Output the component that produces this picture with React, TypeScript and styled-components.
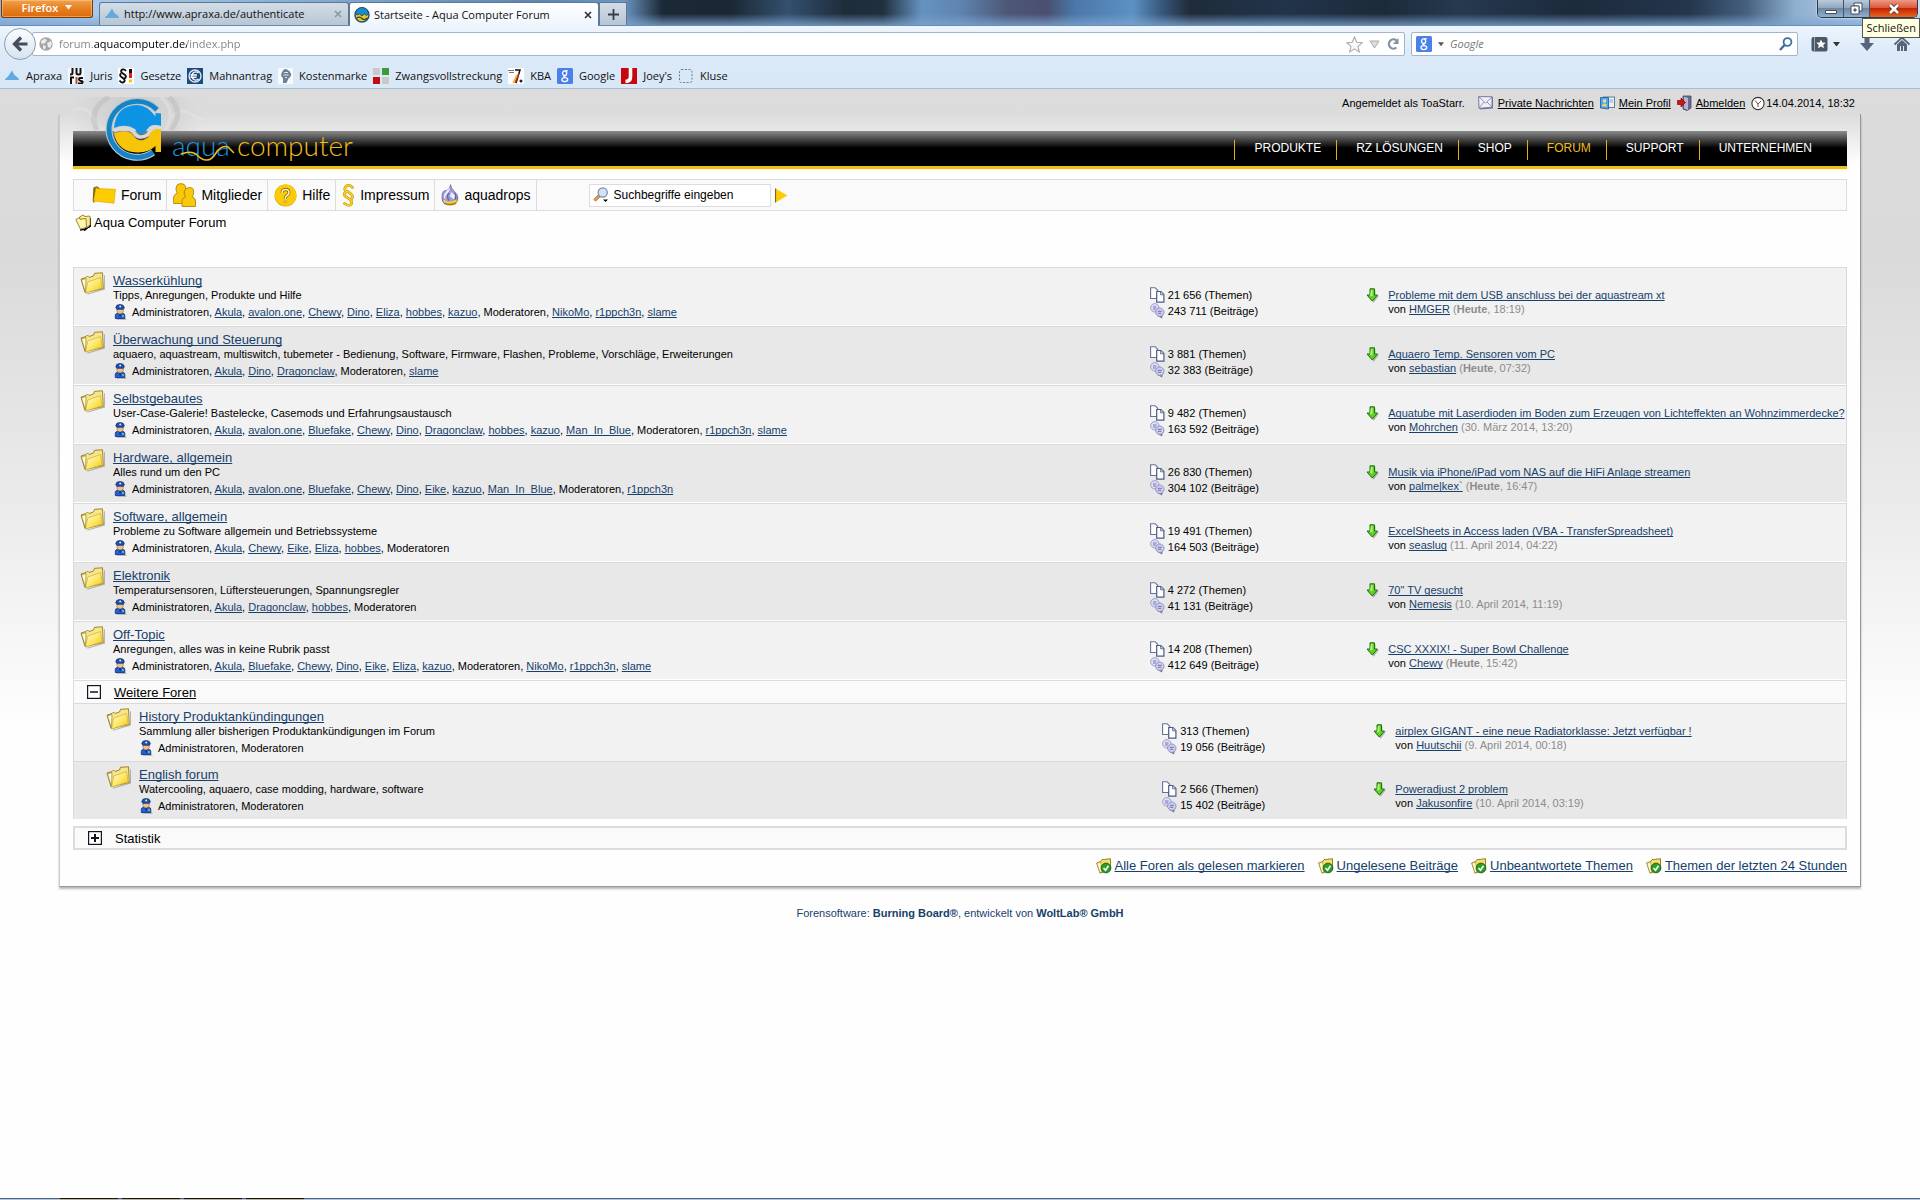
import React from "react";
import styled, { createGlobalStyle, css } from "styled-components";

const ui = `"Open Sans", "Noto Sans", sans-serif`;
const forumFont = `"Liberation Sans", Arial, sans-serif`;

const Global = createGlobalStyle`
  * { box-sizing: border-box; }
  html, body { margin: 0; padding: 0; background: #fefefe; }
  body { font-family: ${forumFont}; font-size: 11px; color: #000; }
  button, input { font: inherit; color: inherit; }
  svg { display: block; flex: none; }
`;

const Shell = styled.div`
  min-height: 100vh;
  display: flex;
  flex-direction: column;
`;

/* ---------- browser window ---------- */

const TitleBar = styled.div`
  position: relative;
  display: flex;
  align-items: flex-end;
  height: 26px;
  padding-left: 1px;
  border-bottom: 1px solid #6a8cb0;
  background:
    linear-gradient(180deg, transparent 55%, rgba(125, 165, 210, 0.75) 100%),
    linear-gradient(90deg, #8fb6df 0, #a9c9ea 5%, #86acd4 16%, #5f86b0 28%, #6c96c4 32.5%,
      #1c2936 34.5%, #1b2732 38%, #33506e 41%, #1f2c3a 44%, #20303f 46%, #6692c0 48%,
      #5f84b0 50%, #4c5775 52.5%, #4a4f70 54.5%, #4a78a8 56%, #5d91c4 59%, #38587a 60.5%,
      #1f2b39 62%, #22344a 67%, #1d2a39 72%, #26394f 76%, #1d2a3b 82%, #24364c 88%,
      #45617f 91%, #8fb0d0 93.5%, #b3cce6 97%, #c4d8ee 100%);
`;

const FirefoxButton = styled.button`
  align-self: flex-start;
  display: flex;
  align-items: center;
  justify-content: center;
  gap: 7px;
  width: 92px;
  height: 18px;
  padding: 0 8px 2px 8px;
  border: 1px solid #7c3a06;
  border-top: 0;
  border-radius: 0 0 3px 3px;
  background: linear-gradient(#f0a24c, #e87f22 50%, #d96b0c);
  box-shadow: inset 0 0 0 1px rgba(255, 210, 150, 0.5);
  color: #fff;
  font: 600 11px/14px ${ui};
`;

const Tab = styled.button<{ $active?: boolean }>`
  display: flex;
  align-items: center;
  gap: 4px;
  width: 250px;
  height: ${(p) => (p.$active ? 24 : 23)}px;
  margin-bottom: ${(p) => (p.$active ? -1 : 0)}px;
  padding: 0 6px 0 4px;
  border: 1px solid #5b7896;
  border-bottom: 0;
  border-radius: 3px 3px 0 0;
  background: ${(p) =>
    p.$active ? "linear-gradient(#ffffff, #eef5fc)" : "linear-gradient(#d3dde6, #b7c6d5)"};
  color: #111;
  font: 11px/16px ${ui};
  text-align: left;
  white-space: nowrap;
`;
const TabStrip = styled.nav`
  display: flex;
  align-items: flex-end;
  margin-left: 6px;
`;
const TabTitle = styled.span`
  flex: 1;
`;
const NewTab = styled.button`
  display: flex;
  align-items: center;
  justify-content: center;
  width: 28px;
  height: 23px;
  padding: 0;
  border: 1px solid #5b7896;
  border-bottom: 0;
  background: linear-gradient(#d3dde6, #b7c6d5);
`;

const WindowButtons = styled.div`
  align-self: flex-start;
  display: flex;
  margin-left: auto;
  margin-right: 2px;
  border: 1px solid #2a3a4c;
  border-top: 0;
  border-radius: 0 0 5px 5px;
  overflow: hidden;
  box-shadow: 0 0 2px #fff;
`;
const WindowButton = styled.button<{ $close?: boolean }>`
  display: flex;
  align-items: center;
  justify-content: center;
  width: ${(p) => (p.$close ? 47 : 26)}px;
  height: 17px;
  padding: 0;
  border: 0;
  border-right: ${(p) => (p.$close ? 0 : "1px solid #3f556d")};
  background: ${(p) =>
    p.$close
      ? "linear-gradient(#eb9a85, #dd5a3a 45%, #c62405 50%, #e8661c)"
      : "linear-gradient(#b9cadb, #93a9bf 45%, #6f88a2 50%, #8fb0cf)"};
`;
const Tooltip = styled.div`
  position: absolute;
  z-index: 2;
  right: 0;
  top: 18px;
  padding: 1px 3px;
  border: 1px solid #555;
  background: #ffffe1;
  color: #111;
  font: 11px/16px ${ui};
`;

const Toolbars = styled.div`
  background: linear-gradient(#edf5fd, #dbe9f8 45%, #d9e8f7);
  border-bottom: 1px solid #a8bdd4;
`;
const NavBar = styled.div`
  display: flex;
  align-items: center;
  height: 36px;
  padding: 0 10px 0 4px;
`;
const BackButton = styled.button`
  position: relative;
  z-index: 1;
  display: flex;
  align-items: center;
  justify-content: center;
  width: 32px;
  height: 32px;
  padding: 0;
  border: 1px solid #8c9db0;
  border-radius: 50%;
  background: linear-gradient(#fbfdff, #d7e3f0);
`;
const Field = styled.div<{ $width?: string; $joined?: boolean }>`
  display: flex;
  align-items: center;
  gap: 6px;
  flex: ${(p) => (p.$width ? `0 0 ${p.$width}` : "1")};
  height: 24px;
  margin-left: ${(p) => (p.$joined ? -4 : 6)}px;
  padding: 0 4px 0 ${(p) => (p.$joined ? 6 : 4)}px;
  border: 1px solid #a3b5c9;
  border-radius: 2px;
  background: #fff;
`;
const UrlInput = styled.input`
  flex: 1;
  min-width: 0;
  padding: 0;
  border: 0;
  outline: 0;
  background: linear-gradient(90deg, #808080 35px, #000 35px, #000 128px, #808080 128px) text;
  -webkit-text-fill-color: transparent;
  font: 11px/16px ${ui};
`;
const GoogleInput = styled.input`
  flex: 1;
  min-width: 0;
  padding: 0;
  border: 0;
  outline: 0;
  background: none;
  font: italic 11px/16px ${ui};
  &::placeholder { color: #777; opacity: 1; }
`;
const PlainButton = styled.button`
  display: flex;
  align-items: center;
  gap: 5px;
  padding: 0;
  border: 0;
  background: none;
`;
const ToolIcons = styled.div`
  display: flex;
  align-items: center;
  gap: 20px;
  margin-left: 13px;
`;
const Bookmarks = styled.nav`
  display: flex;
  align-items: center;
  gap: 6px;
  height: 26px;
  padding: 1px 0 0 4px;
`;
const Bookmark = styled.a`
  display: flex;
  align-items: center;
  gap: 6px;
  color: #111;
  text-decoration: none;
  white-space: nowrap;
  font: 11px/16px ${ui};
`;

/* ---------- forum page ---------- */

const Page = styled.main`
  flex: 1;
  background: linear-gradient(#dcdcdc 0, #dadada 170px, #ececec 430px, #fefefe 640px);
`;
const UserPanel = styled.div`
  display: flex;
  justify-content: flex-end;
  align-items: center;
  gap: 6px;
  height: 25px;
  padding: 3px 65px 0 0;
  line-height: 14px;
`;
const UserItem = styled.span<{ $tight?: boolean }>`
  display: flex;
  align-items: center;
  gap: ${(p) => (p.$tight ? 1 : 4)}px;
`;
const UserName = styled.span`
  margin-right: 7px;
`;
const linkLine = css`
  text-decoration: underline;
  text-decoration-skip-ink: none;
  text-underline-offset: 1px;
  text-decoration-thickness: 1px;
`;
const DarkLink = styled.a`
  color: #000;
  ${linkLine}
`;
const Link = styled.a`
  color: #173f6b;
  ${linkLine}
`;

const Frame = styled.div`
  position: relative;
  margin: 0 59px;
  padding: 17px 13px 10px;
  border: 1px solid #999;
  border-top: 0;
  border-left-color: #cbcbcb;
  background: linear-gradient(rgba(255, 255, 255, 0) 0, #fefefe 50px);
  box-shadow: 0 2px 2px rgba(0, 0, 0, 0.28);
`;
const Brand = styled.a`
  position: absolute;
  left: 13px;
  top: -18px;
`;
const Header = styled.header`
  display: flex;
  justify-content: flex-end;
  height: 38px;
  padding: 9px 20px 0 0;
  border-bottom: 3px solid #efbd23;
  background: linear-gradient(#8c8c8c, #000 17px);
  box-shadow: 0 1px 1px #ffffc0;
`;
const HeaderLink = styled.a<{ $current?: boolean }>`
  height: 20px;
  padding: 0 15px 0 19px;
  border-left: 1px solid #e0ae22;
  color: ${(p) => (p.$current ? "#f0bb20" : "#fff")};
  font-size: 12px;
  line-height: 16px;
  text-decoration: none;
`;

const MenuBar = styled.nav`
  display: flex;
  align-items: center;
  height: 32px;
  margin-top: 10px;
  padding-left: 12px;
  border: 1px solid #dcdcdc;
  background: #fafafa;
`;
const MenuLink = styled.a`
  display: flex;
  align-items: center;
  gap: 5px;
  height: 30px;
  padding: 0 5px 0 6px;
  border-right: 1px solid #dcdcdc;
  color: #000;
  font-size: 14px;
  text-decoration: none;
`;
const SearchForm = styled.form`
  display: flex;
  align-items: center;
  gap: 4px;
  margin-left: 52px;
`;
const SearchBox = styled.label`
  display: flex;
  align-items: center;
  gap: 5px;
  width: 182px;
  height: 23px;
  padding-left: 3px;
  border: 1px solid #dcdcdc;
  background: #fff;
`;
const SearchInput = styled.input`
  width: 140px;
  padding: 0;
  border: 0;
  outline: 0;
  background: none;
  font-size: 12px;
`;

const Crumbs = styled.div`
  display: flex;
  align-items: center;
  gap: 2px;
  height: 22px;
  margin-bottom: 34px;
  padding-left: 2px;
  font-size: 13px;
`;

const Table = styled.table`
  width: 100%;
  table-layout: fixed;
  border-spacing: 0;
  border-collapse: separate;
`;
const Row = styled.tr<{ $alt: boolean }>`
  background: ${(p) => (p.$alt ? "#e8e8e8" : "#f2f2f2")};
`;
const Cell = styled.td<{ $top: number; $nested?: boolean }>`
  height: ${(p) => (p.$nested ? 58 : 59)}px;
  padding: ${(p) => p.$top}px 0 0;
  border: 0 solid #d9d9d9;
  border-top-width: 1px;
  border-bottom: ${(p) => (p.$nested ? "0" : "1px solid #fff")};
  vertical-align: top;
  white-space: nowrap;
  &:first-child { border-left-width: 1px; }
  &:last-child { border-right-width: 1px; }
`;
const FolderCell = styled(Cell)`
  padding-left: ${(p) => (p.$nested ? 32 : 6)}px;
`;
const Title = styled(Link)`
  display: table;
  font-size: 13px;
  line-height: 16px;
`;
const Description = styled.div`
  line-height: 13px;
`;
const Staff = styled.div`
  display: flex;
  align-items: center;
  gap: 4px;
  height: 14px;
  margin-top: 3px;
  line-height: 14px;
`;
const Stat = styled.div`
  display: flex;
  align-items: center;
  gap: 3px;
  height: 16px;
`;
const LastPost = styled.div`
  display: flex;
  gap: 9px;
  line-height: 14px;
`;
const PostTime = styled.span`
  color: #8c8c8c;
`;

const SectionBar = styled.button<{ $boxed?: boolean }>`
  display: flex;
  align-items: center;
  gap: 13px;
  width: 100%;
  height: ${(p) => (p.$boxed ? 24 : 23)}px;
  margin-top: ${(p) => (p.$boxed ? 7 : 0)}px;
  padding: 0 0 0 13px;
  border: solid #dcdcdc;
  border-width: ${(p) => (p.$boxed ? "2px" : "1px 1px 0")};
  background: #fafafa;
  font-size: 13px;
  text-align: left;
`;
const SectionName = styled.span<{ $underlined?: boolean }>`
  ${(p) => p.$underlined && linkLine}
`;

const Actions = styled.div`
  display: flex;
  justify-content: flex-end;
  gap: 13px;
  margin-top: 6px;
  font-size: 13px;
  line-height: 20px;
`;
const Action = styled.span`
  display: flex;
  align-items: center;
  gap: 3px;
`;
const Footer = styled.footer`
  padding-top: 19px;
  color: #173f6b;
  line-height: 14px;
  text-align: center;
`;

const Taskbar = styled.div`
  display: flex;
  gap: 4px;
  height: 2px;
  padding-left: 60px;
  border-top: 1px solid #4d6480;
  background: #b4c8e2;
`;
const TaskItem = styled.span`
  width: 58px;
  height: 2px;
  margin-top: -1px;
  background: linear-gradient(#10161e 1px, #c8b48c 1px);
`;

/* ---------- icons ---------- */

const Folder = () => (
  <svg width="25" height="23" viewBox="0 0 25 23">
    <defs>
      <linearGradient id="fold" x1="0" y1="0" x2="1" y2="1">
        <stop offset="0" stopColor="#fffde0" />
        <stop offset="0.5" stopColor="#fde96c" />
        <stop offset="1" stopColor="#f2c40e" />
      </linearGradient>
    </defs>
    <path d="M6 22 24 16.500V3l1 .5v14L8 22.500z" fill="#777" opacity=".5" />
    <path d="M5 20.500 1 7l5-1.500L7.500 4l1.500 1.500L13.500 4l1-2.700L22.500 .8l.8 15.700z" fill="#f7e58c" stroke="#94791c" strokeWidth=".9" />
    <path d="m5.500 20.500-4-12.500L6 6.500z" fill="#fffbd8" stroke="#87701b" strokeWidth=".6" />
    <path d="m5.500 21 2.300-11L20.500 5.500l1.700 10.500z" fill="url(#fold)" stroke="#c9a420" strokeWidth=".6" />
  </svg>
);
const Officer = () => (
  <svg width="15" height="16" viewBox="0 0 15 16">
    <path d="M3 14.500h10l.8.700-1 .8H4z" fill="#999" opacity=".6" />
    <path d="M2.300 14.500V11.500q0-1.800 2-2.200h5.500q2 .4 2 2.200v3z" fill="#1d62d8" stroke="#0b2c7c" strokeWidth=".8" />
    <path d="M4 4.800h6.200v2.900Q9.500 10 7.100 10T4 7.700z" fill="#f0c08c" stroke="#7c5227" strokeWidth=".5" />
    <path d="M2.800 3.600Q3 .5 7 .5t4.300 3.100L10.500 5.200H3.700z" fill="#1c50bc" stroke="#0b2660" strokeWidth=".7" />
    <circle cx="7.200" cy="2.600" r="1" fill="#f2e9b0" />
    <path d="m6.300 10.200.8 3.800.8-3.800z" fill="#0a1f55" />
    <path d="M9 11.500h2v1H9z" fill="#f5d95a" />
  </svg>
);
const Docs = () => (
  <svg width="15" height="16" viewBox="0 0 15 16">
    <path d="M.6.700h4.500l2.600 2.600v8.200H.6z" fill="#fff" stroke="#64719b" strokeWidth="1.100" />
    <path d="M6.700 4.500h4.200l3 3v7.700H6.700z" fill="#fff" stroke="#4b5a88" strokeWidth="1.200" />
    <path d="M10.600 4.700v3.100h3.200" fill="#ccd5ec" stroke="#4b5a88" strokeWidth=".8" />
  </svg>
);
const Chats = () => (
  <svg width="15" height="16" viewBox="0 0 15 16">
    <path d="M13.500 9.500 12 15.500 7.500 13z" fill="#77759c" />
    <circle cx="4.800" cy="4.800" r="4.200" fill="#dcdcf6" stroke="#8f90bc" strokeWidth=".8" />
    <path d="M3 4h3.500M3 6h3" stroke="#6c6ca8" strokeWidth=".9" />
    <circle cx="9.800" cy="9.200" r="4.200" fill="#cfcff2" stroke="#8081ae" strokeWidth=".8" />
    <path d="M7.800 8.300h4M7.800 10.300h3.500" stroke="#6464a0" strokeWidth=".9" />
  </svg>
);
const DownArrow = () => (
  <svg width="13" height="15" viewBox="0 0 13 15">
    <path d="M4 1.500h5v5.500h3.500L7.200 14 1 7.500h3z" fill="#777" opacity=".5" transform="translate(.5 .7)" />
    <path d="M4 .8h4.500v6.200h3L6.300 13 1 7h3z" fill="#5ad61e" stroke="#21720c" strokeWidth="1" />
    <path d="M5 2h1.500v6H4z" fill="#b4f08a" />
  </svg>
);
const CheckFolder = () => (
  <svg width="16" height="16" viewBox="0 0 16 16">
    <path d="M.7 5 4.500 3.600 6 1.500h1.800L14.500 .7v11L4 15.200z" fill="#f8dd6a" stroke="#8d701a" strokeWidth=".9" />
    <path d="M4 15 .9 5.200 4.600 4 6 13z" fill="#fff8c4" stroke="#a98a2a" strokeWidth=".6" />
    <circle cx="10" cy="10" r="4.900" fill="#2e9d28" stroke="#155f14" strokeWidth=".8" />
    <path d="m7.500 10 2 2.200 3-4.400" fill="none" stroke="#fff" strokeWidth="1.600" />
  </svg>
);
const Plaque = ({ plus }: { plus?: boolean }) => (
  <svg width="14" height="14" viewBox="0 0 14 14">
    <rect x=".6" y=".6" width="12.800" height="12.800" fill="#fff" stroke="#15151f" strokeWidth="1.200" />
    <path d={plus ? "M3 7h8M7 3v8" : "M3 7h8"} stroke="#15151f" strokeWidth={plus ? 2 : 1.500} />
  </svg>
);
const Caret = ({ color = "#333", size = 7 }: { color?: string; size?: number }) => (
  <svg width={size} height="5" viewBox="0 0 7 5">
    <path d="M0 0h7L3.500 4.500z" fill={color} />
  </svg>
);
const Apraxa = () => (
  <svg width="16" height="16" viewBox="0 0 16 16">
    <path d="M1 12q0-2 2-2.500L5 7l3-4.500L10.500 7l2.500 2q2 1 2 3z" fill="#62aadf" />
  </svg>
);
const AquaMark = () => (
  <svg width="16" height="16" viewBox="0 0 16 16">
    <circle cx="8" cy="8" r="7" fill="#f3c317" stroke="#15507e" strokeWidth="1.400" />
    <path d="M1.500 7a6.500 6.500 0 0 1 13 0l-2 1.500L10.500 7 8 9 5.500 7 3 8z" fill="#1b8bd0" stroke="#143c50" strokeWidth=".7" />
    <path d="M3 11q2.500-2 5 .5t5-.5" fill="none" stroke="#1a465c" strokeWidth="1.200" />
  </svg>
);
const GoogleG = () => (
  <svg width="16" height="16" viewBox="0 0 16 16">
    <rect width="16" height="16" rx="1.500" fill="#4a80ea" />
    <ellipse cx="7.600" cy="5.200" rx="2.100" ry="2.300" fill="none" stroke="#fff" strokeWidth="1.300" />
    <ellipse cx="7.800" cy="11.600" rx="2.900" ry="2" fill="none" stroke="#fff" strokeWidth="1.300" />
    <path d="M8 2.700h3M8.500 7.400 7 8.500l2 1.200" fill="none" stroke="#fff" strokeWidth="1.100" />
  </svg>
);
const Juris = () => (
  <svg width="16" height="16" viewBox="0 0 16 16">
    <rect width="16" height="16" fill="#f4f8fc" />
    <path d="M4.500 0v5q0 1.500-2.500 1.500M8.500 0v5q0 1.500 2 1.500T12.500 5V0" fill="none" stroke="#111" strokeWidth="2" />
    <path d="M3 16V9.500h3M15 10h-3q-1 0-1 1.300T13 13t1.500 1.500-1.300 1H10" fill="none" stroke="#111" strokeWidth="2" />
    <path d="M8.500 9v7" stroke="#b8552a" strokeWidth="2" />
  </svg>
);
const Gesetze = () => (
  <svg width="16" height="16" viewBox="0 0 16 16">
    <rect width="16" height="16" fill="#fff" />
    <path d="M8 3Q6.500 1 4.500 1.500T3.500 4.500L7 7q2 2-.5 3.500M3 5.500q-2 2 .5 3.500L6 11q1.500 2-.5 3.200T1.500 12.500" fill="none" stroke="#111" strokeWidth="1.900" />
    <path d="M11 1h3v4h-3z" fill="#111" />
    <path d="M11 5h3v5h-3z" fill="#d22" />
    <path d="M11 11.500h3v3h-3z" fill="#f4c414" />
  </svg>
);
const Mahn = () => (
  <svg width="16" height="16" viewBox="0 0 16 16">
    <rect width="16" height="16" fill="#1f4a7c" />
    <circle cx="8" cy="8" r="6" fill="none" stroke="#dce8f4" strokeWidth="1.400" />
    <path d="M11.500 5a4 4 0 1 0 0 6M3.500 7h6.500M3.500 9.200h6" fill="none" stroke="#fff" strokeWidth="1.400" />
  </svg>
);
const Kosten = () => (
  <svg width="15" height="16" viewBox="0 0 15 16">
    <rect width="15" height="16" fill="#f6fafd" />
    <path d="M5 15V10Q2 8 4 4t5-2.500 4 4-2.500 5L8.500 15z" fill="#6d8196" />
    <path d="M6 4.500h4M5.500 7h5M7 9.500h2" stroke="#dfe8f0" strokeWidth="1" />
  </svg>
);
const Zwang = () => (
  <svg width="16" height="16" viewBox="0 0 16 16">
    <path d="M0 0h7v7H0z" fill="#c9c9c9" />
    <path d="M9 0h7v7H9z" fill="#3d9a37" />
    <path d="M0 9h7v7H0z" fill="#c20a10" />
    <path d="M9 9h7v7H9z" fill="#c9c9c9" />
  </svg>
);
const Kba = () => (
  <svg width="16" height="16" viewBox="0 0 16 16">
    <rect width="16" height="16" fill="#fff" />
    <path d="M0 2.500h6M1 4.500h5" stroke="#777" strokeWidth="1" />
    <path d="M7 2h5L8 15" fill="none" stroke="#111" strokeWidth="1.500" />
    <path d="M11 5 7 15" stroke="#d22" strokeWidth="1.500" />
    <path d="m9 7-4 8" stroke="#f0b814" strokeWidth="1.500" />
    <circle cx="13" cy="13" r="1.500" fill="#222" />
  </svg>
);
const Joey = () => (
  <svg width="16" height="16" viewBox="0 0 16 16">
    <rect width="16" height="16" fill="#c8060c" />
    <path d="M9.500 0v9q0 4-5 4.500" fill="none" stroke="#fff" strokeWidth="3.600" />
  </svg>
);
const Blank = () => (
  <svg width="16" height="16" viewBox="0 0 16 16">
    <rect x="1.500" y="1.500" width="12.500" height="13" rx="2" fill="none" stroke="#777" strokeDasharray="2 1.500" />
  </svg>
);
const Globe = () => (
  <svg width="14" height="14" viewBox="0 0 14 14">
    <circle cx="7" cy="7" r="6.700" fill="#a5a5a5" />
    <path d="M2 4 6 1.500l2 2L6 6 4 7 2 6zM8 6l4-2 1 3-2 4-2-1zM4 8l3 1-1 3.500-2-1z" fill="#ececec" />
  </svg>
);

const MenuFolder = () => (
  <svg width="24" height="18" viewBox="0 0 24 18">
    <path d="M1.500 1.500 5 .3l3 2.200L2 17 .6 15z" fill="#776010" />
    <path d="M4 .7 5 2.500l18.500.8-1.500 14L1.500 15z" fill="#fc0" stroke="#c69804" strokeWidth=".5" />
  </svg>
);
const Members = () => (
  <svg width="23" height="24" viewBox="0 0 23 24">
    <g fill="#fac80a" stroke="#a37d08" strokeWidth=".8">
      <path d="M.6 20.500V14q.4-2.500 3.600-4Q2.500 7.500 3.200 4T8 .6 12.700 4 11 10.500l3 2v8z" />
      <path d="M9 23.500v-6.500q.5-2 3.600-3-2-3-1.300-6t4.900-3.400T20.700 8t-1.500 6q2.800 1 3.300 3v6.500z" />
    </g>
  </svg>
);
const Help = () => (
  <svg width="23" height="23" viewBox="0 0 23 23">
    <circle cx="11.500" cy="11.500" r="11" fill="#d6a500" />
    <circle cx="11.700" cy="11.300" r="10.700" fill="#fcca08" />
    <path d="M8 9q0-3.500 3.500-3.500T15 8.500q0 2-2 3t-1.800 3.700" fill="none" stroke="#7a5c06" strokeWidth="2.800" />
    <path d="M8 9q0-3.500 3.500-3.500T15 8.500q0 2-2 3t-1.800 3.700" fill="none" stroke="#fff6b8" strokeWidth="1.600" />
    <circle cx="11.200" cy="18" r="1.200" fill="#fff6b8" stroke="#7a5c06" strokeWidth=".5" />
  </svg>
);
const Paragraph = () => (
  <svg width="13" height="23" viewBox="0 0 13 23">
    <g fill="none" strokeLinecap="round">
      <path d="M10.500 3.500Q9 1.300 6.500 1.300T3 4t2.500 3.500L9 10q2.500 2 .7 4.500M4 8Q1 9.500 3 12l5 3.500Q11 18 9 20.300t-6.500-.8" stroke="#9c790c" strokeWidth="2.600" />
      <path d="M10.500 3.500Q9 1.300 6.500 1.300T3 4t2.500 3.500L9 10q2.500 2 .7 4.500M4 8Q1 9.500 3 12l5 3.500Q11 18 9 20.300t-6.500-.8" stroke="#fccc14" strokeWidth="2" />
    </g>
  </svg>
);
const Drop = () => (
  <svg width="18" height="22" viewBox="0 0 18 22">
    <path d="M.8 13.500q0 8 8.200 8t8.200-8z" fill="#a8820e" />
    <path d="M9.500.5q.5 4 4 7t3.300 6.500T9 19.500t-8-5.500 3.500-7.500T9.500.5z" fill="#9a9ad8" stroke="#5a5a9c" strokeWidth=".6" />
    <path d="M9 3.500q0 3.500-3 6.500T5 15.500Q2 14 3 11t6-7.500zM10 8l4 3-1 4.500-4-3z" fill="#ececff" />
    <path d="M7.500 9q-2 3 0 7.500M13.500 9q3 4-.5 8" stroke="#55559a" strokeWidth="1" fill="none" />
    <path d="M2.500 16.500q5.500 4.500 13 0" stroke="#f8d030" strokeWidth="2.200" fill="none" />
  </svg>
);
const Magnifier = () => (
  <svg width="16" height="16" viewBox="0 0 16 16">
    <path d="m1.500 13.500 5-5" stroke="#7e4a12" strokeWidth="3" />
    <path d="m1.500 13.500 5-5" stroke="#ef9f4c" strokeWidth="1.900" />
    <circle cx="9.700" cy="5.500" r="4.600" fill="#cfe3f7" stroke="#7b8aa0" strokeWidth="1.200" />
    <path d="M10 12.500h5L12.500 15z" fill="#000" />
  </svg>
);
const CrumbIcon = () => (
  <svg width="17" height="17" viewBox="0 0 17 17">
    <path d="m5 16 4-.2 1 .8 3-3 2.500-1V4l-1 9-5 2z" fill="#000" stroke="#000" strokeWidth="1" />
    <path d="M4.500 3 8 1l2 1.500 4.500-.5.700 1v8l-3 2H7z" fill="#fbeb8e" stroke="#80691a" strokeWidth=".8" />
    <path d="m.8 5.500 3-1.500 1.400 1.300L11 4.500l.5 8.700-6 2z" fill="#fff6b0" stroke="#80691a" strokeWidth=".8" />
  </svg>
);
const Mail = () => (
  <svg width="16" height="14" viewBox="0 0 16 14">
    <path d="M1 2 15 1v11.500L2 13.500z" fill="#7e7e9c" />
    <path d="M.6.700h13.400v10.600l-13 1z" fill="#f0f0fb" stroke="#6b6b98" strokeWidth=".9" />
    <path d="m1 1 6.500 6L14 1M1 12l5-6M14 11 9 6" fill="none" stroke="#8585b0" strokeWidth=".9" />
  </svg>
);
const Profile = () => (
  <svg width="15" height="14" viewBox="0 0 15 14">
    <rect x="3.500" y="1" width="11" height="10.500" fill="#e8f2fc" stroke="#56718e" strokeWidth=".9" />
    <path d="M9.500 4h3.500M9.500 6h3.500" stroke="#8aa" strokeWidth="1" />
    <path d="M.5 12V1.500h8V13z" fill="#4ba8f0" stroke="#1c5892" strokeWidth=".8" />
    <circle cx="4.500" cy="5" r="1.700" fill="#f6dca0" />
    <path d="M2 10.500Q2.200 7.500 4.500 7.500T7 10.500z" fill="#eed36a" />
  </svg>
);
const Logout = () => (
  <svg width="15" height="16" viewBox="0 0 15 16">
    <path d="M6 1h8v12l-4 2.500L6 14z" fill="#6a6a8e" stroke="#44445e" strokeWidth=".8" />
    <path d="M7 1.500 11 3v12l-4-1.500z" fill="#b5b5d2" />
    <path d="M.5 5.500H4V3l4.500 4.500L4 12V9.500H.5z" fill="#d01414" stroke="#7c0606" strokeWidth=".7" />
  </svg>
);
const Clock = () => (
  <svg width="14" height="15" viewBox="0 0 14 15">
    <circle cx="7" cy="7.500" r="6.100" fill="#fff" stroke="#333" strokeWidth="1.100" />
    <path d="M7 8 4 4.500M7 8l3-3M7 8v3" stroke="#844" strokeWidth="1" fill="none" />
  </svg>
);

/* The round emblem, the word mark and the pale swirl behind them. */
const Logo = () => (
  <svg width="290" height="74" viewBox="0 0 290 74">
    <defs>
      <linearGradient id="haze" x1="0" x2="1">
        <stop offset="0" stopColor="#c6c6c6" stopOpacity="0" />
        <stop offset=".35" stopColor="#c4c4c4" />
        <stop offset=".75" stopColor="#cdcdcd" />
        <stop offset="1" stopColor="#dcdcdc" stopOpacity="0" />
      </linearGradient>
    </defs>
    <path d="M0 1h135v34H0z" fill="url(#haze)" opacity=".55" />
    <g fill="none" stroke="#e4e4e4" strokeWidth="3" opacity=".55">
      <path d="M2 14q12-5 19 9t12 8M88 1q16 14 4 33M98 22q10-11 20-4t15 4" />
    </g>
    <g fill="none" stroke="#b8b8b8" strokeWidth="5" opacity=".45">
      <path d="M36 1Q14 14 24 34M96 1q16 15 2 33" />
    </g>
    <path d="M84 13.700A28 28 0 1 0 80 56.300" fill="none" stroke="#b9c6d0" strokeWidth="7" />
    <path d="M84 13.700A28 28 0 1 0 80 56.300" fill="none" stroke="#1583c6" strokeWidth="4.800" />
    <path d="M41 32Q43 9.500 64 9q10 0 18.500 11.500V17l5.500.5V30l-6-1q-5-1-9 6-6 6-11-2-9-6-21-1z" fill="#0c93e4" />
    <path d="M41 35q13-6 20 1.500 5 8 14 2 4-8 9-7.500l4 .7" fill="none" stroke="#d8d8d8" strokeWidth="3.500" />
    <path d="M41 37.500q13-5 19 1.500 6 9 15 2.500 4-9 9-8.500l4 .5V56h-5.500v-6Q75 57 64 56.500 45 56 41 37.500z" fill="#f6c408" />
    <g fontFamily="Lato, sans-serif" fontSize="28" fontWeight="300">
      <text x="99" y="60" fill="#1f93dc">aqua</text>
      <text x="164" y="60" fill="#f0bd1e">computer</text>
    </g>
    <path d="M108 58q11-4 16 1t9 5q5 1 10-7t12-6l6 6" fill="none" stroke="#f0bd1e" strokeWidth="1.500" />
  </svg>
);

/* ---------- data ---------- */

type Forum = {
  title: string;
  text: string;
  staff: string;
  threads: string;
  posts: string;
  last: string;
  by: string;
  today?: boolean;
  time: string;
};

const forums: Forum[] = [
  { title: "Wasserkühlung", text: "Tipps, Anregungen, Produkte und Hilfe", staff: "Administratoren, Akula, avalon.one, Chewy, Dino, Eliza, hobbes, kazuo, Moderatoren, NikoMo, r1ppch3n, slame", threads: "21 656", posts: "243 711", last: "Probleme mit dem USB anschluss bei der aquastream xt", by: "HMGER", today: true, time: "18:19" },
  { title: "Überwachung und Steuerung", text: "aquaero, aquastream, multiswitch, tubemeter - Bedienung, Software, Firmware, Flashen, Probleme, Vorschläge, Erweiterungen", staff: "Administratoren, Akula, Dino, Dragonclaw, Moderatoren, slame", threads: "3 881", posts: "32 383", last: "Aquaero Temp. Sensoren vom PC", by: "sebastian", today: true, time: "07:32" },
  { title: "Selbstgebautes", text: "User-Case-Galerie! Bastelecke, Casemods und Erfahrungsaustausch", staff: "Administratoren, Akula, avalon.one, Bluefake, Chewy, Dino, Dragonclaw, hobbes, kazuo, Man_In_Blue, Moderatoren, r1ppch3n, slame", threads: "9 482", posts: "163 592", last: "Aquatube mit Laserdioden im Boden zum Erzeugen von Lichteffekten an Wohnzimmerdecke?", by: "Mohrchen", time: "30. März 2014, 13:20" },
  { title: "Hardware, allgemein", text: "Alles rund um den PC", staff: "Administratoren, Akula, avalon.one, Bluefake, Chewy, Dino, Eike, kazuo, Man_In_Blue, Moderatoren, r1ppch3n", threads: "26 830", posts: "304 102", last: "Musik via iPhone/iPad vom NAS auf die HiFi Anlage streamen", by: "palme|kex`", today: true, time: "16:47" },
  { title: "Software, allgemein", text: "Probleme zu Software allgemein und Betriebssysteme", staff: "Administratoren, Akula, Chewy, Eike, Eliza, hobbes, Moderatoren", threads: "19 491", posts: "164 503", last: "ExcelSheets in Access laden (VBA - TransferSpreadsheet)", by: "seaslug", time: "11. April 2014, 04:22" },
  { title: "Elektronik", text: "Temperatursensoren, Lüftersteuerungen, Spannungsregler", staff: "Administratoren, Akula, Dragonclaw, hobbes, Moderatoren", threads: "4 272", posts: "41 131", last: "70\" TV gesucht", by: "Nemesis", time: "10. April 2014, 11:19" },
  { title: "Off-Topic", text: "Anregungen, alles was in keine Rubrik passt", staff: "Administratoren, Akula, Bluefake, Chewy, Dino, Eike, Eliza, kazuo, Moderatoren, NikoMo, r1ppch3n, slame", threads: "14 208", posts: "412 649", last: "CSC XXXIX! - Super Bowl Challenge", by: "Chewy", today: true, time: "15:42" },
];

const moreForums: Forum[] = [
  { title: "History Produktankündingungen", text: "Sammlung aller bisherigen Produktankündigungen im Forum", staff: "Administratoren, Moderatoren", threads: "313", posts: "19 056", last: "airplex GIGANT - eine neue Radiatorklasse: Jetzt verfügbar !", by: "Huutschii", time: "9. April 2014, 00:18" },
  { title: "English forum", text: "Watercooling, aquaero, case modding, hardware, software", staff: "Administratoren, Moderatoren", threads: "2 566", posts: "15 402", last: "Poweradjust 2 problem", by: "Jakusonfire", time: "10. April 2014, 03:19" },
];

const groups = ["Administratoren", "Moderatoren"];

const StaffNames = ({ names }: { names: string }) => (
  <span>
    {names.split(", ").map((name, i) => (
      <React.Fragment key={name}>
        {i > 0 && ", "}
        {groups.includes(name) ? name : <Link href="#">{name}</Link>}
      </React.Fragment>
    ))}
  </span>
);

const ForumTable = ({ rows, nested }: { rows: Forum[]; nested?: boolean }) => (
  <Table>
    <colgroup>
      <col style={{ width: nested ? 66 : 40 }} />
      <col />
      <col style={{ width: nested ? "11.9%" : "12.2%" }} />
      <col style={{ width: nested ? "26.7%" : "27.1%" }} />
    </colgroup>
    <tbody>
      {rows.map((f, i) => (
        <Row key={f.title} $alt={i % 2 === 1}>
          <FolderCell $top={4} $nested={nested}><Folder /></FolderCell>
          <Cell $top={5} $nested={nested}>
            <Title href="#">{f.title}</Title>
            <Description>{f.text}</Description>
            <Staff><Officer /><StaffNames names={f.staff} /></Staff>
          </Cell>
          <Cell $top={19} $nested={nested}>
            <Stat><Docs />{f.threads} (Themen)</Stat>
            <Stat><Chats />{f.posts} (Beiträge)</Stat>
          </Cell>
          <Cell $top={20} $nested={nested}>
            <LastPost>
              <DownArrow />
              <div>
                <Link href="#">{f.last}</Link>
                <div>
                  von <Link href="#">{f.by}</Link>{" "}
                  <PostTime>({f.today && <><b>Heute</b>, </>}{f.time})</PostTime>
                </div>
              </div>
            </LastPost>
          </Cell>
        </Row>
      ))}
    </tbody>
  </Table>
);

const bookmarks: [string, React.ReactNode][] = [
  ["Apraxa", <Apraxa />],
  ["Juris", <Juris />],
  ["Gesetze", <Gesetze />],
  ["Mahnantrag", <Mahn />],
  ["Kostenmarke", <Kosten />],
  ["Zwangsvollstreckung", <Zwang />],
  ["KBA", <Kba />],
  ["Google", <GoogleG />],
  ["Joey's", <Joey />],
  ["Kluse", <Blank />],
];

const headerLinks = ["PRODUKTE", "RZ LÖSUNGEN", "SHOP", "FORUM", "SUPPORT", "UNTERNEHMEN"];
const menu: [string, React.ReactNode][] = [
  ["Forum", <MenuFolder />],
  ["Mitglieder", <Members />],
  ["Hilfe", <Help />],
  ["Impressum", <Paragraph />],
  ["aquadrops", <Drop />],
];
const actions = ["Alle Foren als gelesen markieren", "Ungelesene Beiträge", "Unbeantwortete Themen", "Themen der letzten 24 Stunden"];

const CloseMark = ({ color }: { color: string }) => (
  <svg width="8" height="8" viewBox="0 0 8 8">
    <path d="m1 1 6 6M7 1 1 7" stroke={color} strokeWidth="1.700" />
  </svg>
);

const Browser = () => (
  <>
    <TitleBar>
      <FirefoxButton>Firefox<Caret color="#fff" /></FirefoxButton>
      <TabStrip>
        <Tab><Apraxa /><TabTitle>http://www.apraxa.de/authenticate</TabTitle><CloseMark color="#8a98a6" /></Tab>
        <Tab $active><AquaMark /><TabTitle>Startseite - Aqua Computer Forum</TabTitle><CloseMark color="#333" /></Tab>
        <NewTab aria-label="Neuer Tab">
          <svg width="11" height="11" viewBox="0 0 11 11"><path d="M0 5.500h11M5.500 0v11" stroke="#333e4a" strokeWidth="1.800" /></svg>
        </NewTab>
      </TabStrip>
      <WindowButtons>
        <WindowButton aria-label="Minimieren">
          <svg width="12" height="14" viewBox="0 0 12 14"><path d="M.5 8.500h11v3H.5z" fill="#fff" stroke="#454f5c" /></svg>
        </WindowButton>
        <WindowButton aria-label="Verkleinern">
          <svg width="13" height="13" viewBox="0 0 13 13">
            <path d="M4 1h8v8H9V4H4z" fill="#fff" stroke="#454f5c" />
            <path d="M1 4h8v8H1zM4 7v2h2V7z" fill="#fff" stroke="#454f5c" fillRule="evenodd" />
          </svg>
        </WindowButton>
        <WindowButton $close aria-label="Schließen">
          <svg width="14" height="12" viewBox="0 0 14 12">
            <path d="m3 2 8 8M11 2l-8 8" stroke="#54302a" strokeWidth="4.200" />
            <path d="m3 2 8 8M11 2l-8 8" stroke="#fff" strokeWidth="2.600" />
          </svg>
        </WindowButton>
      </WindowButtons>
      <Tooltip role="tooltip">Schließen</Tooltip>
    </TitleBar>
    <Toolbars>
      <NavBar>
        <BackButton aria-label="Zurück">
          <svg width="16" height="16" viewBox="0 0 16 16"><path d="M9 1.500 2.500 8 9 14.500M3 8h12.500" fill="none" stroke="#424e5c" strokeWidth="3.200" /></svg>
        </BackButton>
        <Field $joined>
          <Globe />
          <UrlInput aria-label="Adresse" defaultValue="forum.aquacomputer.de/index.php" />
          <PlainButton aria-label="Lesezeichen setzen">
            <svg width="17" height="17" viewBox="0 0 17 17"><path d="m8.500 1 2.200 5.200 5.500.5-4.200 3.700 1.300 5.500-4.800-3-4.800 3L5 10.400.8 6.700l5.500-.5z" fill="#fafafa" stroke="#aaa" strokeWidth="1.100" /></svg>
          </PlainButton>
          <svg width="11" height="9" viewBox="0 0 11 9"><path d="M1 1h9L5.500 8z" fill="#ddd" stroke="#aaa" /></svg>
          <PlainButton aria-label="Neu laden">
            <svg width="14" height="14" viewBox="0 0 14 14"><path d="M10.500 10.500a4.600 4.600 0 1 1 0-7" fill="none" stroke="#8290a0" strokeWidth="2.200" /><path d="M12.500 1v6H7z" fill="#8290a0" /></svg>
          </PlainButton>
        </Field>
        <Field $width="387px">
          <GoogleG />
          <Caret color="#555" size={6} />
          <GoogleInput aria-label="Suche" placeholder="Google" />
          <svg width="14" height="14" viewBox="0 0 14 14"><path d="m1 13 5-5.500" stroke="#3b70a8" strokeWidth="2.400" /><circle cx="8.500" cy="5" r="3.900" fill="none" stroke="#3b70a8" strokeWidth="1.800" /></svg>
        </Field>
        <ToolIcons>
          <PlainButton aria-label="Lesezeichen">
            <svg width="17" height="15" viewBox="0 0 17 15"><rect x=".5" width="16" height="14.500" rx="2" fill="#4b5767" /><path d="M3.500 0v14.500" stroke="#9aa7b6" /><path d="m10 2.500 1.400 3 3.300.3-2.500 2.200.8 3.300L10 9.500l-3 1.800.8-3.300L5.300 5.800l3.300-.3z" fill="#fff" /></svg>
            <Caret />
          </PlainButton>
          <PlainButton aria-label="Downloads">
            <svg width="14" height="16" viewBox="0 0 14 16"><path d="M4.500 0h5v7H14l-7 8L0 7h4.500z" fill="#57647a" /></svg>
          </PlainButton>
          <PlainButton aria-label="Startseite">
            <svg width="16" height="16" viewBox="0 0 16 16"><path d="M.5 8.500 8 1.500l7.500 7" fill="none" stroke="#57647a" strokeWidth="1.800" /><path d="M3 8.500 8 4l5 4.500V15h-3v-5H9v5H7v-5H6v5H3z" fill="#57647a" /></svg>
          </PlainButton>
        </ToolIcons>
      </NavBar>
      <Bookmarks>
        {bookmarks.map(([name, icon]) => (
          <Bookmark key={name} href="#">{icon}{name}</Bookmark>
        ))}
      </Bookmarks>
    </Toolbars>
  </>
);

export default function App() {
  return (
    <Shell>
      <Global />
      <Browser />
      <Page>
        <UserPanel>
          <UserName>Angemeldet als ToaStarr.</UserName>
          <UserItem><Mail /><DarkLink href="#">Private Nachrichten</DarkLink></UserItem>
          <UserItem><Profile /><DarkLink href="#">Mein Profil</DarkLink></UserItem>
          <UserItem><Logout /><DarkLink href="#">Abmelden</DarkLink></UserItem>
          <UserItem $tight><Clock />14.04.2014, 18:32</UserItem>
        </UserPanel>
        <Frame>
          <Header>
            {headerLinks.map((name) => (
              <HeaderLink key={name} href="#" $current={name === "FORUM"}>{name}</HeaderLink>
            ))}
          </Header>
          <Brand href="#" aria-label="aquacomputer"><Logo /></Brand>
          <MenuBar>
            {menu.map(([name, icon]) => (
              <MenuLink key={name} href="#">{icon}{name}</MenuLink>
            ))}
            <SearchForm>
              <SearchBox>
                <Magnifier />
                <SearchInput aria-label="Suche" defaultValue="Suchbegriffe eingeben" />
              </SearchBox>
              <PlainButton type="button" aria-label="Suchen">
                <svg width="13" height="15" viewBox="0 0 13 15"><path d="M.5.500v14L12.500 7.500z" fill="#fc0" /><path d="M.6.500v14" stroke="#6b5a10" /></svg>
              </PlainButton>
            </SearchForm>
          </MenuBar>
          <Crumbs><CrumbIcon />Aqua Computer Forum</Crumbs>
          <ForumTable rows={forums} />
          <SectionBar><Plaque /><SectionName $underlined>Weitere Foren</SectionName></SectionBar>
          <ForumTable rows={moreForums} nested />
          <SectionBar $boxed><Plaque plus /><SectionName>Statistik</SectionName></SectionBar>
          <Actions>
            {actions.map((name) => (
              <Action key={name}><CheckFolder /><Link href="#">{name}</Link></Action>
            ))}
          </Actions>
        </Frame>
        <Footer>
          Forensoftware: <b>Burning Board®</b>, entwickelt von <b>WoltLab® GmbH</b>
        </Footer>
      </Page>
      <Taskbar>
        <TaskItem /><TaskItem /><TaskItem /><TaskItem />
      </Taskbar>
    </Shell>
  );
}
